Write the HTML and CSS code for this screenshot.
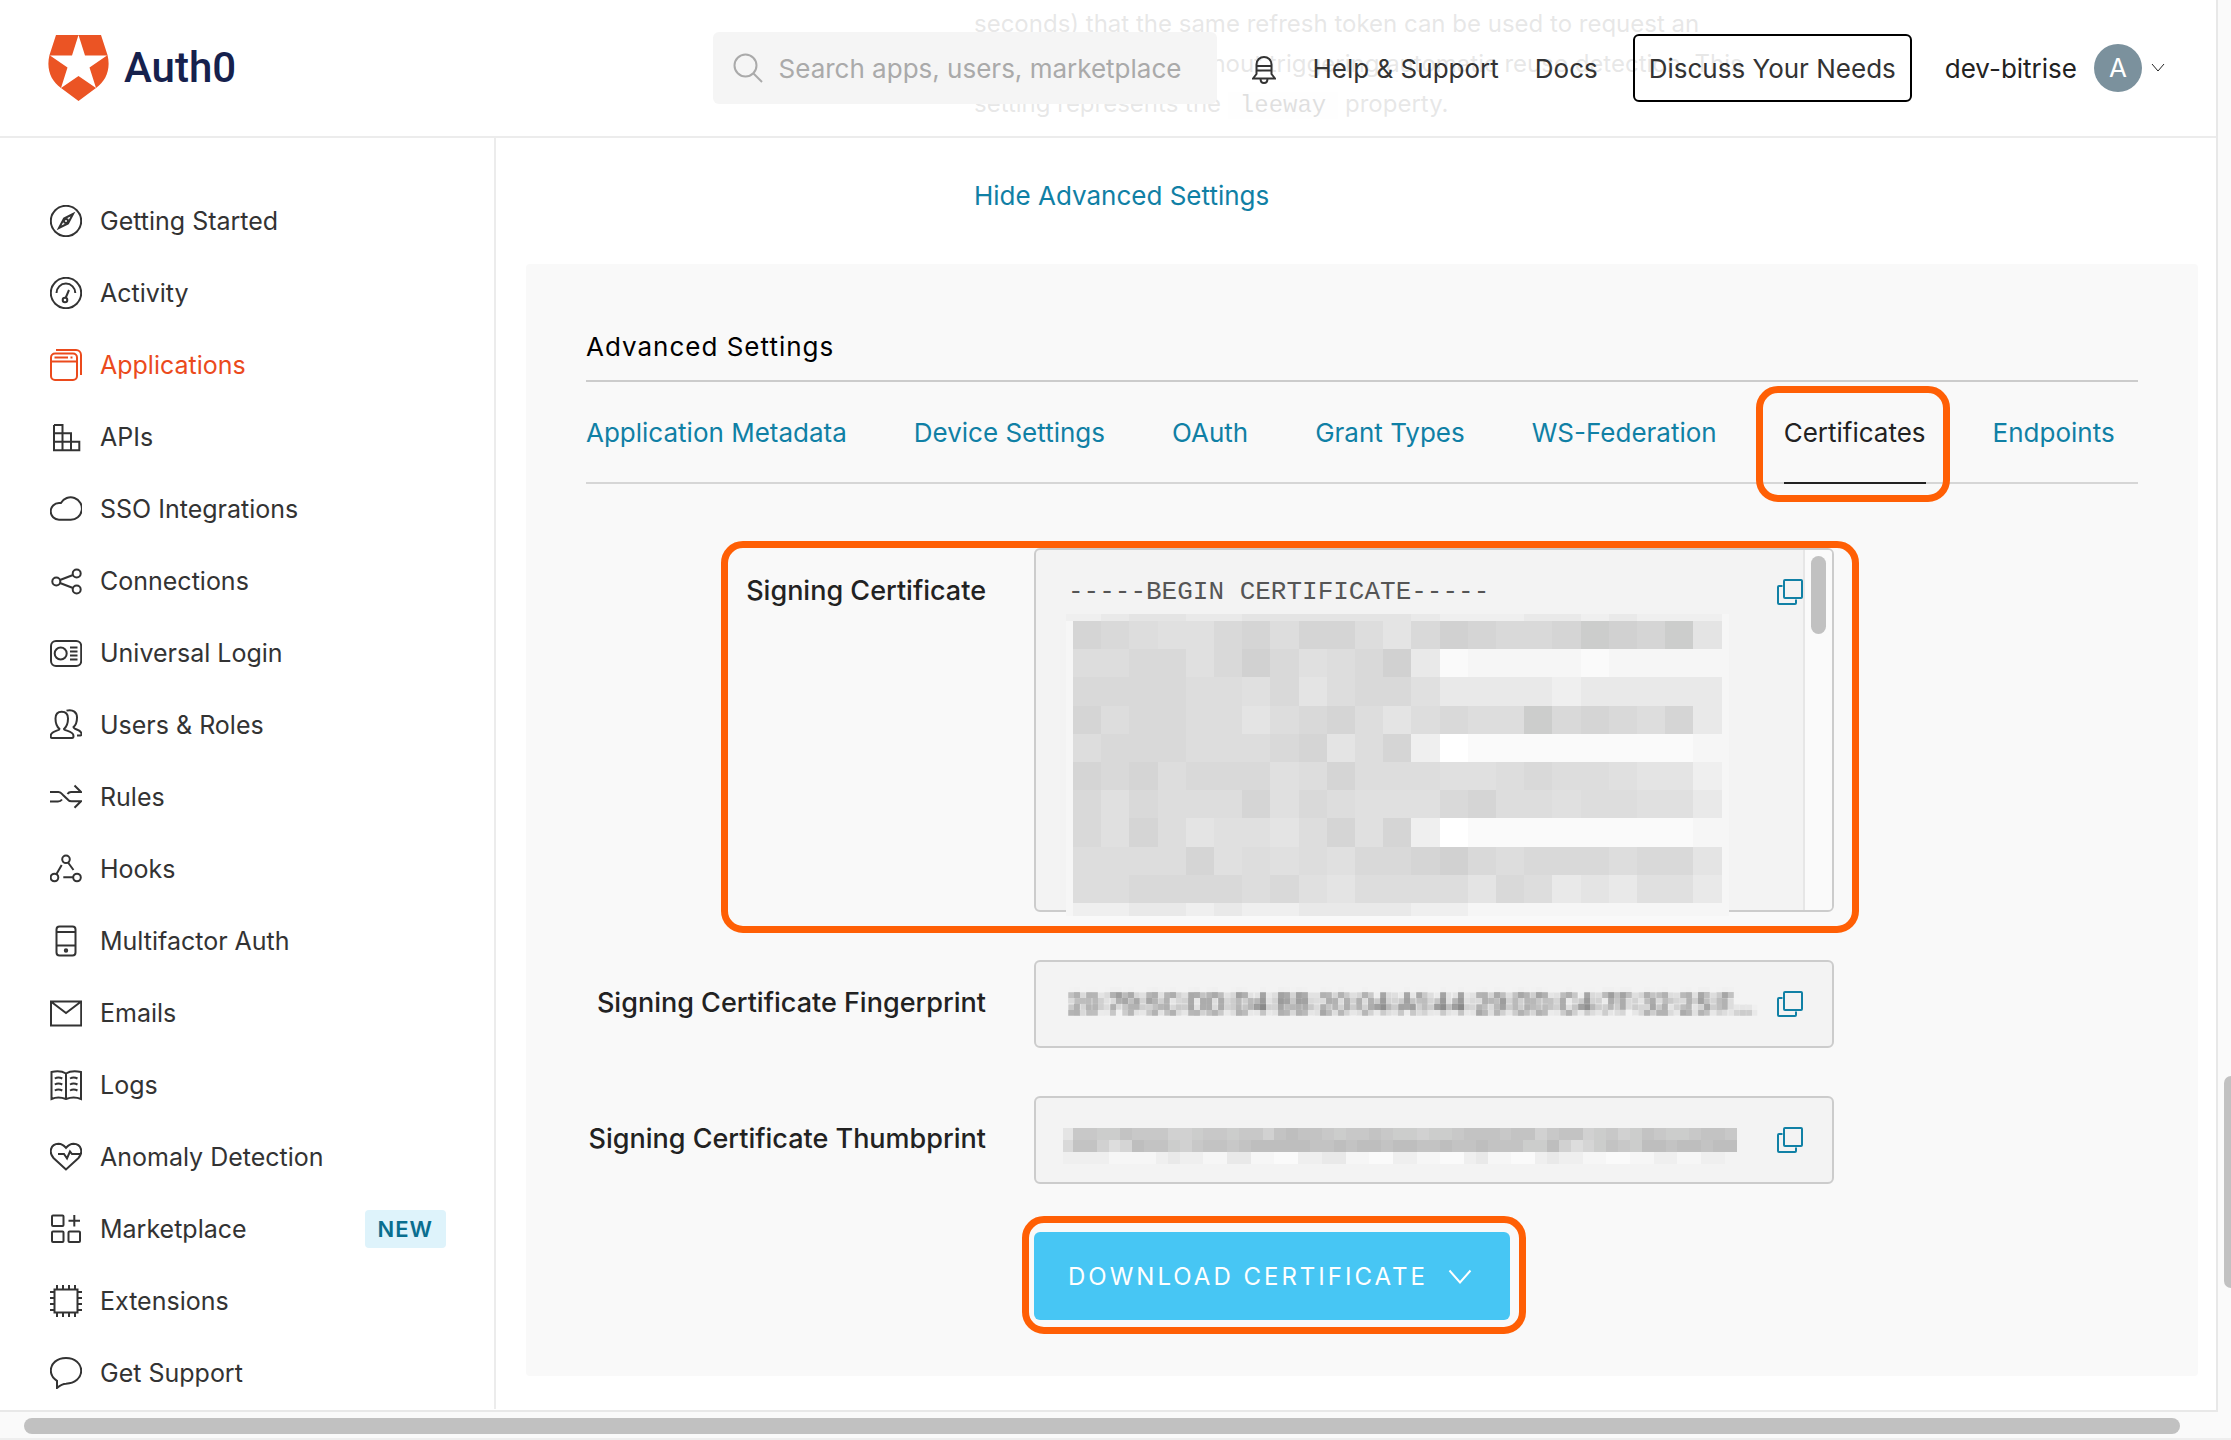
FILE: index.html
```
<!DOCTYPE html>
<html lang="en">
<head>
<meta charset="utf-8">
<meta name="viewport" content="width=device-width, initial-scale=1">
<title>Application Settings - Auth0</title>
<link rel="stylesheet" href="styles.css">
</head>
<body>
<svg class="defs" aria-hidden="true">
  <symbol id="copy" viewBox="0 0 26 26"><rect x="7" y="1" width="18" height="18" rx="1"/><path d="M5.500 7H2a1 1 0 0 0-1 1v16a1 1 0 0 0 1 1h16a1 1 0 0 0 1-1v-3.500"/></symbol>
  <filter id="pixelate" x="0" y="0" width="100%" height="100%">
    <feGaussianBlur in="SourceGraphic" stdDeviation="2" result="soft"/>
    <feFlood x="2" y="2" width="2" height="2" flood-color="#000"/>
    <feComposite width="6" height="6"/>
    <feTile result="dots"/>
    <feComposite in="soft" in2="dots" operator="in"/>
    <feMorphology operator="dilate" radius="2"/>
  </filter>
</svg>

<div class="window">
  <div class="viewport">
    <header class="topbar">
      <a class="logo" href="#">
        <svg width="61" height="66" viewBox="0 0 61 66" aria-hidden="true"><path fill="#eb5424" d="M8 0H53L59.500 20C63 34 58 46 48 53L30.500 66 13 53C3 46-2 34 1.500 20Z"/><path fill="#fff" d="M30.500 0L37 20.500H59L41.500 32.500 48 53 30.500 41 13 53 19.500 32.500 2 20.500H24Z"/></svg>
        <span>Auth0</span>
      </a>
      <div class="search">
        <svg width="30" height="30" viewBox="0 0 30 30" aria-hidden="true"><circle cx="12.500" cy="12.500" r="11"/><path d="M20.500 20.500L29 29"/></svg>
        <input type="search" aria-label="Search" placeholder="Search apps, users, marketplace">
      </div>
      <button class="bell" aria-label="Notifications"><svg width="24" height="28" viewBox="0 0 24 28"><path d="M4.500 18V8.500C4.500 4 8 1 12 1s7.500 3 7.500 7.500V18l3.500 4.500H1zM4.500 10h15M4.500 14.500h15M8.500 22.500c0 6 7 6 7 0"/></svg></button>
      <nav class="links"><a href="#">Help &amp; Support</a><a href="#">Docs</a></nav>
      <button class="discuss">Discuss Your Needs</button>
      <button class="account"><span>dev-bitrise</span><span class="avatar">A</span><svg width="14" height="10" viewBox="0 0 14 10" aria-hidden="true"><path d="M1 1l6 7 6-7"/></svg></button>
    </header>

    <div class="layout">
      <aside>
        <nav class="menu">
          <a href="#"><svg viewBox="0 0 32 32"><circle cx="16" cy="16" r="15.200"/><path d="M23 9l-9 4.500L9 23l9-4.500z"/><circle cx="16" cy="16" r="2"/></svg>Getting Started</a>
          <a href="#"><svg viewBox="0 0 32 32"><circle cx="16" cy="16" r="15.200"/><path d="M6.500 16a9.300 9.300 0 0 1 18.800 0M15.600 21L19 13"/><circle cx="15" cy="23" r="2.300"/></svg>Activity</a>
          <a href="#" class="current" aria-current="page"><svg viewBox="0 0 32 32"><rect x="1" y="4.500" width="26" height="26.500" rx="4"/><path d="M1 12.500h26M4.500 8.500h13.500M20.500 8.500h2M6 1h20a5 5 0 0 1 5 5v20"/></svg>Applications</a>
          <a href="#"><svg viewBox="0 0 32 32"><path d="M4 4h8.500v25.300M4 4v25.300h25.300v-8.600H4M4 12.300h17v17"/></svg>APIs</a>
          <a href="#"><svg viewBox="0 0 32 32"><path d="M9 26.700h11.500a11.200 11.200 0 1 0-9.600-16.600H9a8.300 8.300 0 0 0 0 16.600z"/></svg>SSO Integrations</a>
          <a href="#"><svg viewBox="0 0 32 32"><circle cx="6.300" cy="16.500" r="4"/><circle cx="26.700" cy="8.500" r="4"/><circle cx="26.700" cy="24.500" r="4"/><path d="M10 15l13-5M10 18l13 5"/></svg>Connections</a>
          <a href="#"><svg viewBox="0 0 32 32"><rect x="1" y="4" width="30.200" height="25" rx="5"/><circle cx="10.700" cy="16.500" r="6"/><path d="M20 10.500h7.500M20 14.500h7.500M20 18.500h7.500M20 22.500h7.500"/></svg>Universal Login</a>
          <a href="#"><svg viewBox="0 0 32 32"><path d="M9.500 20C6 17 5.500 13 5.500 9.500 5.500 5 8 2.700 11.700 2.700S18 5 18 9.500c0 3.500-.5 7.500-4 10.500 0 2 9.500 1.500 9.500 7 0 1.500-.5 2-1.500 2H2c-1 0-1.300-.7-1.300-2C.7 21.500 9.500 22 9.500 20zM16.500 1.600C23.500 0 27 3.500 27 8.500c0 3.500-1 7.500-3.500 9.500 0 3 8 2 8 7 0 1-.3 1.500-1.200 1.500H27"/></svg>Users &amp; Roles</a>
          <a href="#"><svg viewBox="0 0 32 32"><path d="M0 11h8.500c2 0 3 1.300 4.500 3l5 4.800c1 1.200 2 1.500 3.500 1.500H31l-6.500 6.500M0 20.500h8c2 0 3-.6 4-2M17.500 13c1-1.500 2-2 3.500-2h10l-6.500-6.500"/></svg>Rules</a>
          <a href="#"><svg viewBox="0 0 32 32"><circle cx="16" cy="6.300" r="3.800"/><circle cx="4.500" cy="24.500" r="3.800"/><circle cx="27" cy="24.500" r="3.800"/><path d="M11.700 12L6.500 21M18 9.500l5.500 7.500M13.300 24.300H23"/></svg>Hooks</a>
          <a href="#"><svg viewBox="0 0 32 32"><rect x="6.500" y="1.500" width="19" height="29" rx="3"/><path d="M6.500 7h19M6.500 20.500h19"/><circle cx="16" cy="25.500" r="1.200"/></svg>Multifactor Auth</a>
          <a href="#"><svg viewBox="0 0 32 32"><path d="M1 4.500h30.200v24H1zM1.500 5L16 16 30.500 5"/></svg>Emails</a>
          <a href="#"><svg viewBox="0 0 32 32"><path d="M16 4.500C12 2 6 2 1.500 3v27c4.500-2 10.500-1.500 14.500 0 4-1.500 10-2 15 0V3C26 2 20 2 16 4.500V30M4.800 9.500q3.500-2 7.500 0M4.800 15.500q3.500-2 7.500 0M4.800 21.500q3.500-2 7.500 0M20 9.500q3.500-2 7.500 0M20 15.500q3.500-2 7.500 0M20 21.500q3.500-2 7.500 0"/></svg>Logs</a>
          <a href="#"><svg viewBox="0 0 32 32"><path d="M16 28.500L3.500 17C-1.500 11.500.5 3 8.500 2.800 12 2.800 14 4.500 16 7c2-2.500 4-4.200 7.500-4.200C31.500 3 33.500 11.500 28.500 17zM8 13h6l3 4.500 3-7 2 2.500h8"/></svg>Anomaly Detection</a>
          <a href="#"><svg viewBox="0 0 32 32"><rect x="2" y="2.500" width="11.500" height="10.500" rx="1"/><rect x="2" y="18.500" width="11.500" height="10.500" rx="1"/><rect x="18.500" y="18.500" width="11.500" height="10.500" rx="1"/><path d="M24.300 2v11.500M18.500 7.800H30"/></svg>Marketplace<span class="badge">NEW</span></a>
          <a href="#"><svg viewBox="0 0 32 32"><path d="M4.500 4.500h23v23h-23zM7 4.500V0M13 4.500V0M19 4.500V0M25 4.500V0M7 32v-4.500M13 32v-4.500M19 32v-4.500M25 32v-4.500M0 7h4.500M0 13h4.500M0 19h4.500M0 25h4.500M27.500 7H32M27.500 13H32M27.500 19H32M27.500 25H32"/></svg>Extensions</a>
          <a href="#"><svg viewBox="0 0 32 32"><path d="M16 1C7 1 .8 6.500.8 13.500c0 4.500 2.500 8 6.200 10.300V31c4-3.500 7-4.300 9-4.300 9-.2 15.200-5.700 15.200-13C31.200 6.500 25 1 16 1z"/></svg>Get Support</a>
        </nav>
      </aside>

      <main>
        <p class="help">seconds) that the same refresh token can be used to request an<br>any access token without triggering automatic reuse detection. This<br>setting represents the <code>leeway</code> property.</p>
        <a class="toggle" href="#advanced">Hide Advanced Settings</a>

        <section class="panel" id="advanced">
          <h2>Advanced Settings</h2>
          <nav class="tabs">
            <a href="#">Application Metadata</a>
            <a href="#">Device Settings</a>
            <a href="#">OAuth</a>
            <a href="#">Grant Types</a>
            <a href="#">WS-Federation</a>
            <a href="#" class="active" aria-current="true">Certificates</a>
            <a href="#">Endpoints</a>
          </nav>

          <form>
            <div class="row marked">
              <label for="cert">Signing Certificate</label>
              <div class="field area">
                <textarea id="cert" readonly>-----BEGIN CERTIFICATE-----</textarea>
                <button type="button" class="copy" aria-label="Copy certificate"><svg><use href="#copy"/></svg></button>
                <div class="track"><div class="thumb"></div></div>
                <svg class="mosaic mosaic-cert" id="mosaic-cert" aria-hidden="true"></svg>
              </div>
            </div>
            <div class="row">
              <label for="finger">Signing Certificate Fingerprint</label>
              <div class="field">
                <input class="pixelated" id="finger" readonly value="20:79:5C:DD:D4:BB:20:04:A1:44:29:DD:C4:7F:32:25:F…">
                <button type="button" class="copy" aria-label="Copy fingerprint"><svg><use href="#copy"/></svg></button>
              </div>
            </div>
            <div class="row">
              <label for="thumb">Signing Certificate Thumbprint</label>
              <div class="field">
                <input id="thumb" readonly>
                <button type="button" class="copy" aria-label="Copy thumbprint"><svg><use href="#copy"/></svg></button>
                <svg class="mosaic mosaic-thumb" id="mosaic-thumb" aria-hidden="true"></svg>
              </div>
            </div>
            <div class="row">
              <span></span>
              <div><button type="button" class="download">DOWNLOAD CERTIFICATE<svg width="24" height="16" viewBox="0 0 24 16" aria-hidden="true"><path d="M1.500 1.500L12 13.500 22.500 1.500"/></svg></button></div>
            </div>
          </form>
        </section>
      </main>
    </div>
  </div>
  <div class="vbar"><div class="thumb"></div></div>
  <div class="hbar"><div class="thumb"></div></div>
</div>
<script src="mosaic.js"></script>
</body>
</html>
```
FILE: styles.css
```
* { box-sizing: border-box; }
body { margin: 0; background: #fff; color: #333; font: 26px/40px Inter, "Liberation Sans", sans-serif; }
a { color: inherit; text-decoration: none; }
button { font: inherit; color: inherit; background: none; border: 0; padding: 0; }
svg { fill: none; stroke: currentColor; stroke-width: 2; flex: none; }
.defs { position: absolute; width: 0; height: 0; }

.window { display: grid; grid-template: minmax(0, 1fr) auto / minmax(0, 1fr) auto; height: 100vh; }
.viewport { position: relative; overflow: hidden; border: solid #e8e8e8; border-width: 0 2px 2px 0; }

/* page scrollbars */
.vbar { display: grid; grid-template-rows: 1076fr 212fr 124fr; width: 13px; padding-left: 6px; background: #fafafa; }
.vbar .thumb { grid-row: 2; background: #c1c1c1; border-radius: 8px 0 0 8px; }
.hbar { grid-column: 1 / -1; padding: 6px 51px 4px 24px; background: #fafafa; border-bottom: 2px solid #eee; }
.hbar .thumb { height: 16px; background: #c1c1c1; border-radius: 8px; }

/* top bar */
.topbar { position: absolute; inset: 0 0 auto; z-index: 2; display: flex; align-items: center; height: 138px; padding: 0 51px 0 48px; background: rgba(255, 255, 255, .86); border-bottom: 2px solid #ececec; }
.logo { display: flex; align-items: center; gap: 15px; margin-right: auto; color: #16214d; font: 500 42px/60px Roboto, sans-serif; }
.logo svg { stroke: none; }
.search { display: flex; align-items: center; gap: 16px; width: 504px; height: 72px; padding: 0 8px 0 20px; margin-right: 35px; background: #f5f5f5; border-radius: 6px; color: #aaa; }
.search input { flex: 1; min-width: 0; padding: 2px 0 0; border: 0; background: none; font: inherit; }
.search input::placeholder { color: #aaa; opacity: 1; }
.bell { display: flex; margin-right: 37px; padding-top: 4px; }
.links { display: flex; gap: 36px; margin-right: 35px; padding-top: 2px; }
.discuss { height: 68px; padding: 2px 14px 0; margin-right: 33px; border: 2px solid #000; border-radius: 6px; }
.account { display: flex; align-items: center; color: #222; }
.account span:first-child { padding-top: 2px; }
.avatar { width: 48px; margin: 0 9px 0 17px; border-radius: 50%; background: #7b919d; color: #fff; line-height: 48px; }
.account svg { stroke-width: 1; }

/* sidebar */
.layout { display: flex; }
aside { flex: none; width: 496px; margin-top: 138px; padding: 47px 48px 0 50px; border-right: 2px solid #ececec; }
.menu a { display: flex; align-items: center; gap: 18px; height: 72px; font-size: 25px; }
.menu svg { width: 32px; height: 32px; }
.current { color: #eb4a1c; }
.badge { margin-left: auto; padding: 0 13px; background: #def3fb; border-radius: 4px; color: #0a6e8f; font-size: 22px; font-weight: 600; line-height: 38px; letter-spacing: 1px; }

/* content */
main { flex: 1; min-width: 0; padding: 4px 18px 0 30px; }
.help { margin: 0 0 52px 448px; font-size: 24px; color: #555; }
.help code { padding: 0 12px; font: 24px "Liberation Mono", monospace; background: #f4f4f4; color: #222; }
.toggle { display: block; margin-left: 448px; color: #1080a5; }
.panel { margin-top: 48px; padding: 63px 60px 56px; background: #f9f9f9; border-radius: 4px; }
h2 { margin: 0; padding-bottom: 13px; border-bottom: 2px solid #ccc; color: #000; font-size: 26px; font-weight: 400; letter-spacing: 1px; }
.tabs { display: flex; gap: 67px; border-bottom: 2px solid #d6d6d6; color: #1080a5; }
.tabs a { padding: 31px 0 29px; margin-bottom: -2px; border-bottom: 2px solid transparent; white-space: nowrap; }
.tabs .active { position: relative; border-color: #222; color: #222; }

form { display: grid; gap: 48px; width: fit-content; padding-top: 64px; }
.row { display: grid; grid-template-columns: 400px 800px; gap: 48px; }
label { padding-top: 23px; color: #222; font-size: 27px; font-weight: 500; text-align: right; white-space: nowrap; }
.field { position: relative; display: flex; align-items: center; height: 88px; padding: 0 29px 0 32px; border: 2px solid #ccc; border-radius: 6px; background: #f3f3f3; }
.field input, .field textarea { flex: 1; min-width: 0; align-self: stretch; padding: 0; border: 0; outline: 0; background: none; color: #555; font: inherit; resize: none; }
.area { height: 364px; padding-right: 0; }
.area textarea { padding-top: 22px; overflow: hidden; font: 26px/40px "Liberation Mono", monospace; }
.copy { display: flex; color: #1080a5; }
.copy svg { width: 26px; height: 26px; stroke-width: 2; }
.area .copy { align-self: flex-start; margin-top: 29px; }
.track { align-self: stretch; width: 29px; padding: 6px; border-left: 2px solid #e6e6e6; border-radius: 0 4px 4px 0; background: #fafafa; }
.track .thumb { height: 78px; background: #c1c1c1; border-radius: 8px; }
.field .pixelated { color: #444; filter: url(#pixelate); }
.mosaic { position: absolute; stroke: none; shape-rendering: crispEdges; }
.mosaic-cert { left: 30px; top: 64px; width: 663px; height: 302px; }
.mosaic-thumb { left: 27px; top: 30px; width: 674px; height: 36px; }
.download { display: flex; align-items: center; gap: 20px; height: 88px; padding: 2px 38px 0 34px; background: #47c6f4; border-radius: 6px; color: #fff; font-size: 24px; letter-spacing: 3px; }

/* call-out outlines */
.active::after, .marked::after, .download::after { content: ""; position: absolute; border: 7px solid #ff5f05; border-radius: 22px; pointer-events: none; }
.marked, .download { position: relative; }
.active::after { inset: 4px -24px -20px -28px; }
.marked::after { inset: -7px -25px -21px 135px; }
.download::after { inset: -16px -16px -14px -12px; }
```
FILE: mosaic.js
```
// Redaction blocks: each character is one block, an index into the grey scale.
const greys = ['#fff', '#fafafa', '#f6f6f6', '#efefef', '#e9e9e9', '#e4e4e4', '#e0e0e0', '#dddddd', '#d9d9d9', '#d5d5d5', '#d1d1d1', '#cccdcc', '#c8c8c8', '#c3c3c3', '#bebebe', '#b9b9b9'];

function draw(id, rows, xs, ys) {
  const svg = document.getElementById(id);
  rows.forEach((row, r) => [...row].forEach((level, c) => {
    const rect = document.createElementNS('http://www.w3.org/2000/svg', 'rect');
    rect.setAttribute('x', xs(c));
    rect.setAttribute('y', ys(r));
    rect.setAttribute('width', xs(c + 1) - xs(c));
    rect.setAttribute('height', ys(r + 1) - ys(r));
    rect.setAttribute('fill', greys[parseInt(level, 16)]);
    svg.append(rect);
  }));
}

draw('mosaic-cert', [
  '3345544555555433344343332',
  '29876689799758A9889BA9B52',
  '2778868A8678A412222122222',
  '2888877685788644443444442',
  '2978877578975787' + '7B8987942',
  '2788877789579301111111122',
  '2989788867977766787765532',
  '2868777968766689776776642',
  '2869756657969301111111122',
  '27777967676889A8788878852',
  '2778888786577775874546642',
  '2334434334444332222222222'
], c => c === 0 ? 0 : c > 24 ? 663 : Math.round(7 + (c - 1) * 28.2), r => r === 0 ? 0 : r > 11 ? 302 : Math.round(7 + (r - 1) * 28.2));

draw('mosaic-thumb', [
  '5CCBBDCCCAABCCBCCADEDDCBCCDCBBABBCDDDCDDACDDABCABDCBBCDDC',
  '8DDA79EDDBACDDCDEEEEEDDEDEEDEEDDEDDEDDDBBEA79BDCBEEDEEDEE',
  '33332222343322442211334422113322113422113433221122332233'
], c => c === 0 ? 0 : Math.round(10 + (c - 1) * 11.850), r => r * 12);
```
